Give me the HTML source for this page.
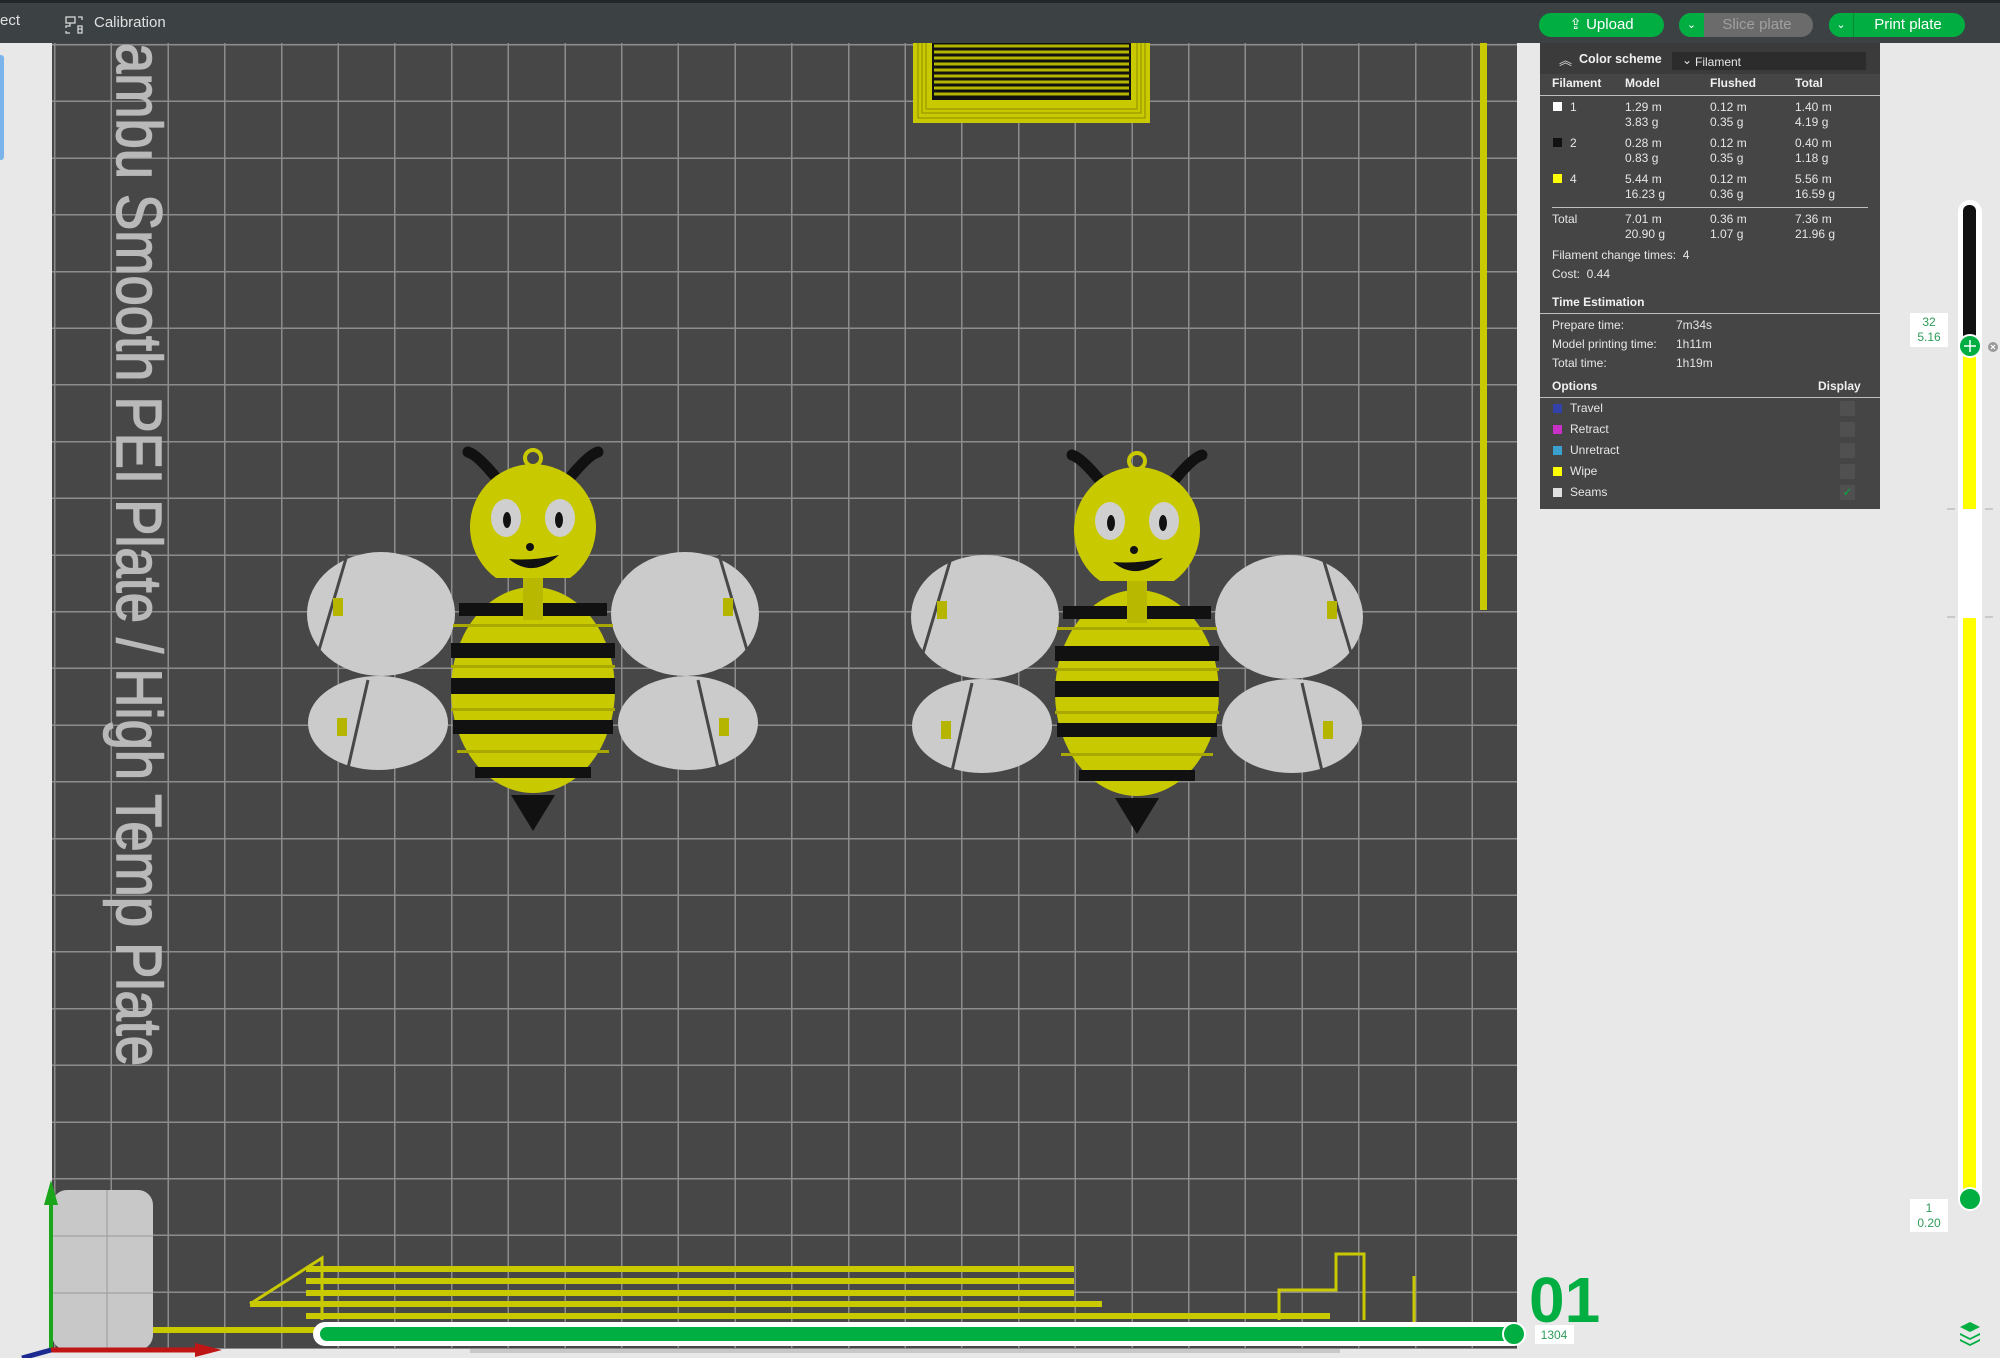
<!DOCTYPE html>
<html><head><meta charset="utf-8">
<style>
*{margin:0;padding:0;box-sizing:border-box}
body{width:2000px;height:1358px;overflow:hidden;background:#e8e8e8;font-family:"Liberation Sans",sans-serif;position:relative}
.abs{position:absolute}
#top{left:0;top:0;width:2000px;height:43px;background:#3c4244;border-top:3px solid #23272a}
#vp{left:52px;top:43px;width:1465px;height:1306px;background-color:#474747;
background-image:
repeating-linear-gradient(90deg,transparent 0,transparent 2px,#8c8c8c 2px,#8c8c8c 3.5px,transparent 3.5px,transparent 56.7px),
repeating-linear-gradient(180deg,transparent 0,transparent 1px,#8c8c8c 1px,#8c8c8c 2.5px,transparent 2.5px,transparent 56.7px);}
.btn{position:absolute;top:13px;height:24px;border-radius:12px;color:#fff;font-size:15px;line-height:24px;text-align:center}
#panel{left:1540px;top:43px;width:340px;height:466px;background:#454545;color:#e6e6e6;font-size:12px}
#panel div{position:absolute;white-space:nowrap}
.b{font-weight:bold;color:#f0f0f0}
.sw{width:9px;height:9px}
.hr{height:1px;background:#bdbdbd}
.cb{width:15px;height:15px;background:#505050}
.lab{background:#fff;color:#2e9c5a;font-size:12px;text-align:center;line-height:15px}
</style></head><body>
<div id="top" class="abs"></div>
<div class="abs" style="left:0;top:12px;color:#e0e0e0;font-size:15px">ect</div>
<svg class="abs" style="left:64px;top:15px" width="20" height="20" viewBox="0 0 20 20" fill="none" stroke="#d8d8d8" stroke-width="1.3"><rect x="2" y="2" width="9" height="6"/><path d="M6 8v3H2v2M14 2h4v3M2 16v2h4M14 11h4v7h-4zM18 14h-4"/></svg>
<div class="abs" style="left:94px;top:14px;color:#e0e0e0;font-size:15px">Calibration</div>

<div class="btn" style="left:1539px;width:125px;background:#00ae42">⇪ Upload</div>
<div class="btn" style="left:1679px;width:134px;background:#6b6b6b;color:#a0a0a0;padding-left:22px">Slice plate</div>
<div class="btn" style="left:1679px;width:25px;background:#00ae42;border-radius:12px 0 0 12px;font-size:11px">⌄</div>
<div class="btn" style="left:1829px;width:136px;background:#00ae42;padding-left:22px">Print plate</div>
<div class="btn" style="left:1829px;width:25px;background:#00ae42;border-right:1px solid #008a35;border-radius:12px 0 0 12px;font-size:11px">⌄</div>

<div class="abs" style="left:0;top:43px;width:52px;height:1315px;background:#e8e8e8"></div>
<div class="abs" style="left:0;top:55px;width:4px;height:105px;background:#7bb4ea;border-radius:0 3px 3px 0"></div>
<div class="abs" style="left:1517px;top:43px;width:483px;height:1315px;background:#e8e8e8"></div>
<div id="vp" class="abs"></div>

<svg class="abs" style="left:0;top:0" width="2000" height="1358">
<defs>
<g id="bee">
 <path d="M-35,-210 q-20,-25 -30,-28" stroke="#111" stroke-width="11" fill="none" stroke-linecap="round"/>
 <path d="M35,-210 q20,-25 30,-28" stroke="#111" stroke-width="11" fill="none" stroke-linecap="round"/>
 <circle cx="0" cy="-232" r="8" fill="none" stroke="#c9c900" stroke-width="4"/>
 <path d="M-37,-112 A63,63 0 1 1 37,-112 Z" fill="#c9c900"/>
 <ellipse cx="-27" cy="-172" rx="15" ry="19" fill="#cfcfcf"/><ellipse cx="27" cy="-172" rx="15" ry="19" fill="#cfcfcf"/>
 <ellipse cx="-26" cy="-170" rx="4" ry="8" fill="#111"/><ellipse cx="26" cy="-170" rx="4" ry="8" fill="#111"/>
 <circle cx="-3" cy="-143" r="4" fill="#111"/>
 <path d="M-24,-131 q24,20 50,-4 q-25,6 -50,4z" fill="#111"/>
 <ellipse cx="-152" cy="-76" rx="74" ry="62" fill="#cbcbcb"/>
 <ellipse cx="152" cy="-76" rx="74" ry="62" fill="#cbcbcb"/>
 <ellipse cx="-155" cy="33" rx="70" ry="47" fill="#cbcbcb"/>
 <ellipse cx="155" cy="33" rx="70" ry="47" fill="#cbcbcb"/>
 <g stroke="#474747" stroke-width="3" fill="none"><path d="M-186,-135 l-28,95 M186,-135 l28,95 M-165,-10 l-20,88 M165,-10 l20,88"/></g>
 <g fill="#b5b500"><rect x="-200" y="-92" width="10" height="18"/><rect x="190" y="-92" width="10" height="18"/><rect x="-196" y="28" width="10" height="18"/><rect x="186" y="28" width="10" height="18"/></g>
 <ellipse cx="0" cy="0" rx="82" ry="103" fill="#c9c900"/>
 <g fill="#111"><rect x="-74" y="-87" width="148" height="13"/><rect x="-82" y="-47" width="164" height="15"/><rect x="-82" y="-12" width="164" height="16"/><rect x="-80" y="30" width="160" height="14"/><rect x="-58" y="77" width="116" height="11"/></g>
 <g fill="#a8a800"><rect x="-80" y="-66" width="160" height="3"/><rect x="-82" y="-25" width="164" height="3"/><rect x="-82" y="18" width="164" height="3"/><rect x="-76" y="60" width="152" height="3"/></g>
 <rect x="-10" y="-112" width="20" height="42" fill="#b8b800"/>
 <path d="M-22,105 h44 l-22,36z" fill="#111"/>
</g>
</defs>
<use href="#bee" x="533" y="690"/>
<use href="#bee" x="1137" y="693"/>
<rect x="913" y="43" width="237" height="80" fill="#c9c900"/>
<g fill="none" stroke="#8c8c00" stroke-width="1"><path d="M918,43v75h227v-75M922,43v70h219v-70M926,43v66h211v-66"/></g>
<rect x="932" y="43" width="199" height="57" fill="#111"/>
<g stroke="#b5b500" stroke-width="3"><line x1="934" y1="46" x2="1129" y2="46"/><line x1="934" y1="52" x2="1129" y2="52"/><line x1="934" y1="58" x2="1129" y2="58"/><line x1="934" y1="64" x2="1129" y2="64"/><line x1="934" y1="70" x2="1129" y2="70"/><line x1="934" y1="76" x2="1129" y2="76"/><line x1="934" y1="82" x2="1129" y2="82"/><line x1="934" y1="88" x2="1129" y2="88"/><line x1="934" y1="94" x2="1129" y2="94"/></g>
<rect x="1480" y="43" width="7" height="567" fill="#c9c900"/>
<g stroke="#c9c900" stroke-width="6"><line x1="306" y1="1269" x2="1074" y2="1269"/><line x1="306" y1="1281" x2="1074" y2="1281"/><line x1="306" y1="1293" x2="1074" y2="1293"/><line x1="250" y1="1304" x2="1102" y2="1304"/><line x1="306" y1="1316" x2="1330" y2="1316"/><line x1="152" y1="1330" x2="320" y2="1330"/></g>
<g stroke="#c9c900" stroke-width="3" fill="none"><path d="M250,1304 L322,1258 V1320"/><path d="M1279,1320 V1290 H1336 V1254 H1364 V1320"/><path d="M1414,1276 V1322"/></g>
<rect x="52" y="1190" width="101" height="160" rx="15" fill="#c8c8c8"/>
<line x1="107" y1="1190" x2="107" y2="1350" stroke="#999" stroke-width="1"/>
<line x1="52" y1="1236" x2="153" y2="1236" stroke="#999"/><line x1="52" y1="1293" x2="153" y2="1293" stroke="#999"/>
<line x1="51" y1="1350" x2="51" y2="1195" stroke="#1aa51a" stroke-width="4"/><path d="M44,1205 L51,1180 L58,1205z" fill="#1aa51a"/>
<line x1="51" y1="1350" x2="200" y2="1350" stroke="#c01515" stroke-width="5"/><path d="M195,1343 L222,1350 L195,1357z" fill="#c01515"/>
<line x1="51" y1="1350" x2="22" y2="1358" stroke="#1a2a90" stroke-width="5"/>
<line x1="470" y1="1351" x2="1340" y2="1351" stroke="#c8c8c8" stroke-width="4"/>
<text x="0" y="0" transform="translate(113,43) rotate(90)" font-family="Liberation Sans" font-size="64" fill="#b9b9b9" stroke="#b9b9b9" stroke-width="1.5" textLength="1023" lengthAdjust="spacingAndGlyphs" dy="-4">ambu Smooth PEI Plate / High Temp Plate</text>
<rect x="313" y="1322" width="1210" height="24" rx="12" fill="#fff"/>
<rect x="320" y="1327" width="1196" height="14" rx="7" fill="#00ae42"/>
<circle cx="1514" cy="1334" r="11" fill="#00ae42" stroke="#fff" stroke-width="2"/>
<rect x="1535" y="1325" width="39" height="19" fill="#fff"/>
<text x="1554" y="1339" text-anchor="middle" font-size="12" fill="#2e9c5a" font-family="Liberation Sans">1304</text>
<text x="1529" y="1322" font-size="64" font-weight="bold" fill="#00ae42" font-family="Liberation Sans">01</text>
<rect x="1958" y="200" width="24" height="1010" rx="12" fill="#fff"/>
<rect x="1963" y="205" width="13" height="142" rx="6" fill="#111"/>
<rect x="1963" y="350" width="13" height="159" fill="#ffff00"/>
<rect x="1963" y="618" width="13" height="580" fill="#ffff00"/>
<g stroke="#aaa" stroke-width="1"><line x1="1947" y1="509" x2="1955" y2="509"/><line x1="1985" y1="509" x2="1993" y2="509"/><line x1="1947" y1="617" x2="1955" y2="617"/><line x1="1985" y1="617" x2="1993" y2="617"/></g>
<circle cx="1970" cy="346" r="11" fill="#00ae42" stroke="#fff" stroke-width="2"/>
<path d="M1964,346h12M1970,340v12" stroke="#fff" stroke-width="1.5"/>
<circle cx="1993" cy="347" r="5" fill="#999"/><path d="M1991,345l4,4M1995,345l-4,4" stroke="#fff" stroke-width="1.2"/>
<rect x="1910" y="313" width="38" height="34" fill="#fff"/>
<circle cx="1970" cy="1199" r="11" fill="#00ae42" stroke="#fff" stroke-width="2"/>
<rect x="1910" y="1199" width="38" height="33" fill="#fff"/>
<g fill="#00ae42"><path d="M1960,1327 l10,-5 l10,5 l-10,5z"/><path d="M1960,1333 l10,5 l10,-5 v2 l-10,5 l-10,-5z"/><path d="M1960,1339 l10,5 l10,-5 v2 l-10,5 l-10,-5z"/></g>
</svg>
<div class="abs lab" style="left:1910px;top:315px;width:38px">32<br>5.16</div>
<div class="abs lab" style="left:1910px;top:1201px;width:38px">1<br>0.20</div>

<div id="panel" class="abs">
 <div style="left:0;top:0;width:340px;height:31px;background:#3b3b3b"></div>
 <div style="left:19px;top:7px;color:#ddd;font-size:13px">︽</div>
 <div class="b" style="left:39px;top:9px;font-size:12.5px">Color scheme</div>
 <div style="left:131px;top:8px;width:196px;height:20px;background:#2c2c2c;border:1px solid #3a3a3a;border-radius:2px"></div>
 <div style="left:142px;top:10px">⌄</div>
 <div style="left:155px;top:12px">Filament</div>
 <div class="b" style="left:12px;top:33px">Filament</div><div class="b" style="left:85px;top:33px">Model</div><div class="b" style="left:170px;top:33px">Flushed</div><div class="b" style="left:255px;top:33px">Total</div>
 <div class="hr" style="left:0;top:52px;width:340px"></div>
 <div class="sw" style="left:13px;top:59px;background:#fff"></div><div style="left:30px;top:57px">1</div>
 <div style="left:85px;top:57px;line-height:15px">1.29 m<br>3.83 g</div><div style="left:170px;top:57px;line-height:15px">0.12 m<br>0.35 g</div><div style="left:255px;top:57px;line-height:15px">1.40 m<br>4.19 g</div>
 <div class="sw" style="left:13px;top:95px;background:#111"></div><div style="left:30px;top:93px">2</div>
 <div style="left:85px;top:93px;line-height:15px">0.28 m<br>0.83 g</div><div style="left:170px;top:93px;line-height:15px">0.12 m<br>0.35 g</div><div style="left:255px;top:93px;line-height:15px">0.40 m<br>1.18 g</div>
 <div class="sw" style="left:13px;top:131px;background:#ffff00"></div><div style="left:30px;top:129px">4</div>
 <div style="left:85px;top:129px;line-height:15px">5.44 m<br>16.23 g</div><div style="left:170px;top:129px;line-height:15px">0.12 m<br>0.36 g</div><div style="left:255px;top:129px;line-height:15px">5.56 m<br>16.59 g</div>
 <div class="hr" style="left:12px;top:164px;width:316px"></div>
 <div style="left:12px;top:169px">Total</div>
 <div style="left:85px;top:169px;line-height:15px">7.01 m<br>20.90 g</div><div style="left:170px;top:169px;line-height:15px">0.36 m<br>1.07 g</div><div style="left:255px;top:169px;line-height:15px">7.36 m<br>21.96 g</div>
 <div style="left:12px;top:205px">Filament change times:&nbsp;&nbsp;4</div>
 <div style="left:12px;top:224px">Cost:&nbsp;&nbsp;0.44</div>
 <div class="b" style="left:12px;top:252px">Time Estimation</div>
 <div class="hr" style="left:0;top:270px;width:340px"></div>
 <div style="left:12px;top:275px">Prepare time:</div><div style="left:136px;top:275px">7m34s</div>
 <div style="left:12px;top:294px">Model printing time:</div><div style="left:136px;top:294px">1h11m</div>
 <div style="left:12px;top:313px">Total time:</div><div style="left:136px;top:313px">1h19m</div>
 <div class="b" style="left:12px;top:336px">Options</div><div class="b" style="left:278px;top:336px">Display</div>
 <div class="hr" style="left:0;top:354px;width:340px"></div>
 <div class="sw" style="left:13px;top:361px;background:#3242a8"></div><div style="left:30px;top:358px">Travel</div><div class="cb" style="left:300px;top:358px"></div>
 <div class="sw" style="left:13px;top:382px;background:#c830c8"></div><div style="left:30px;top:379px">Retract</div><div class="cb" style="left:300px;top:379px"></div>
 <div class="sw" style="left:13px;top:403px;background:#3aa0d0"></div><div style="left:30px;top:400px">Unretract</div><div class="cb" style="left:300px;top:400px"></div>
 <div class="sw" style="left:13px;top:424px;background:#ffff00"></div><div style="left:30px;top:421px">Wipe</div><div class="cb" style="left:300px;top:421px"></div>
 <div class="sw" style="left:13px;top:445px;background:#e0e0e0"></div><div style="left:30px;top:442px">Seams</div><div class="cb" style="left:300px;top:442px;color:#00ae42;font-size:12px;line-height:15px;text-align:center">✓</div>
</div>
</body></html>
